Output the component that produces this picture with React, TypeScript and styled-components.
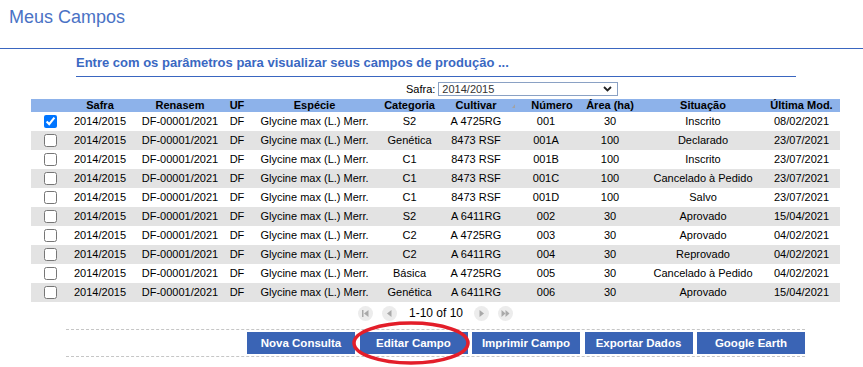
import styled, { createGlobalStyle } from 'styled-components'

const GlobalStyle = createGlobalStyle`
  body {
    margin: 0;
    background: #fff;
    font-family: "Liberation Sans", Arial, sans-serif;
  }
`;

const Page = styled.div`
  position: relative;
  width: 863px;
  height: 367px;
  overflow: hidden;
`;

const TitleBar = styled.div`
  height: 49px;
  box-sizing: border-box;
  border-bottom: 1px solid #3a66c0;
  padding: 6px 0 0 9px;
`;

const Title = styled.h1`
  margin: 0;
  font-size: 18px;
  line-height: 22px;
  font-weight: normal;
  color: #4a72c5;
`;

const Content = styled.div`
  margin-left: 31px;
  width: 809px;
`;

const Subtitle = styled.h2`
  margin: 6px 0 0 45px;
  width: 720px;
  padding-bottom: 5px;
  border-bottom: 1px solid #3a66c0;
  font-size: 13px;
  line-height: 16px;
  font-weight: bold;
  color: #3a68c2;
`;

const FilterRow = styled.div`
  display: flex;
  align-items: center;
  margin: 5px 0 3px 375px;
  font-size: 11px;
  color: #000;
`;

const SelectWrap = styled.div`
  position: relative;
  margin-left: 3px;
  width: 180px;
  height: 14px;
`;

const Select = styled.select`
  appearance: none;
  width: 100%;
  height: 14px;
  box-sizing: border-box;
  margin: 0;
  padding: 0 0 0 3px;
  border: 1px solid #8aa1c4;
  border-radius: 0;
  background: #fff;
  font-family: "Liberation Sans", Arial, sans-serif;
  font-size: 11px;
  line-height: 12px;
  color: #333;
`;

const Chevron = styled.svg`
  position: absolute;
  right: 6px;
  top: 4px;
  pointer-events: none;
`;

const Table = styled.table`
  width: 809px;
  table-layout: fixed;
  border-collapse: collapse;
  font-size: 11px;
  color: #000;
`;

const HeadCell = styled.th<{ $shift?: number }>`
  position: relative;
  height: 13px;
  padding: 0 0 0 ${(p) => p.$shift ?? 0}px;
  background: #8db2ea;
  font-weight: bold;
  line-height: 13px;
  text-align: center;
  white-space: nowrap;
`;

const SortArrow = styled.span`
  position: absolute;
  left: 75px;
  top: 4px;
  width: 0;
  height: 0;
  border-left: 4px solid transparent;
  border-right: 4px solid transparent;
  border-bottom: 5px solid #a3a3a3;
`;

const Row = styled.tr<{ $alt: boolean }>`
  height: 19px;
  background: ${(p) => (p.$alt ? '#e3e3e3' : '#fff')};
`;

const Cell = styled.td`
  padding: 0;
  text-align: center;
  white-space: nowrap;
  line-height: 19px;
`;

const Check = styled.input`
  display: block;
  width: 13px;
  height: 13px;
  margin: 0 auto 0 13px;
`;

const Pager = styled.div`
  display: flex;
  align-items: center;
  justify-content: center;
  margin-top: 4px;
  height: 15px;
  font-size: 12px;
  color: #000;
`;

const PageBtn = styled.span<{ $gap: number }>`
  display: flex;
  align-items: center;
  justify-content: center;
  width: 15px;
  height: 15px;
  border-radius: 50%;
  background: #ececec;
  margin-right: ${(p) => p.$gap}px;
`;

const PageText = styled.span`
  margin: 0 11px 0 3px;
  line-height: 15px;
`;

const ButtonBar = styled.div`
  display: flex;
  justify-content: flex-end;
  gap: 4.5px;
  margin: 8px 0 0 35px;
  width: 739px;
  padding: 2px 0;
  border-top: 1px dashed #c6c6c6;
  border-bottom: 1px dashed #c6c6c6;
`;

const ActionButton = styled.button`
  width: 108px;
  height: 22px;
  margin: 0;
  padding: 0;
  border: none;
  border-radius: 0;
  background: #3a64b5;
  color: #fff;
  font-family: "Liberation Sans", Arial, sans-serif;
  font-size: 11.5px;
  font-weight: bold;
`;

const Highlight = styled.svg`
  position: absolute;
  left: 351px;
  top: 320px;
`;

const widths = [36, 66, 94, 20, 135, 55, 78, 62, 66, 120, 77];

const rows = [
  ['S2', 'A 4725RG', '001', '30', 'Inscrito', '08/02/2021'],
  ['Genética', '8473 RSF', '001A', '100', 'Declarado', '23/07/2021'],
  ['C1', '8473 RSF', '001B', '100', 'Inscrito', '23/07/2021'],
  ['C1', '8473 RSF', '001C', '100', 'Cancelado à Pedido', '23/07/2021'],
  ['C1', '8473 RSF', '001D', '100', 'Salvo', '23/07/2021'],
  ['S2', 'A 6411RG', '002', '30', 'Aprovado', '15/04/2021'],
  ['C2', 'A 4725RG', '003', '30', 'Aprovado', '04/02/2021'],
  ['C2', 'A 6411RG', '004', '30', 'Reprovado', '04/02/2021'],
  ['Básica', 'A 4725RG', '005', '30', 'Cancelado à Pedido', '04/02/2021'],
  ['Genética', 'A 6411RG', '006', '30', 'Aprovado', '15/04/2021'],
];

const PagerIcon = ({ kind }: { kind: 'first' | 'prev' | 'next' | 'last' }) => (
  <svg width="9" height="7" viewBox="0 0 9 7" fill="#a9a9a9">
    {kind === 'first' && (
      <>
        <rect x="1" y="0" width="1.5" height="7" />
        <polygon points="7.5,0 7.5,7 3,3.5" />
      </>
    )}
    {kind === 'prev' && <polygon points="6.5,0 6.5,7 2,3.5" />}
    {kind === 'next' && <polygon points="2.5,0 2.5,7 7,3.5" />}
    {kind === 'last' && (
      <>
        <polygon points="0.5,0 0.5,7 4.5,3.5" />
        <polygon points="4.5,0 4.5,7 8.5,3.5" />
      </>
    )}
  </svg>
);

function App() {
  return (
    <Page>
      <GlobalStyle />
      <TitleBar>
        <Title>Meus Campos</Title>
      </TitleBar>
      <Content>
        <Subtitle>Entre com os parâmetros para visualizar seus campos de produção ...</Subtitle>
        <FilterRow>
          Safra:
          <SelectWrap>
            <Select defaultValue="2014/2015">
              <option>2014/2015</option>
            </Select>
            <Chevron width="9" height="6" viewBox="0 0 9 6">
              <polyline points="1,1 4.5,4.5 8,1" fill="none" stroke="#222" strokeWidth="1.8" />
            </Chevron>
          </SelectWrap>
        </FilterRow>
        <Table>
          <colgroup>
            {widths.map((w, i) => (
              <col key={i} style={{ width: w }} />
            ))}
          </colgroup>
          <thead>
            <tr>
              <HeadCell />
              <HeadCell>Safra</HeadCell>
              <HeadCell>Renasem</HeadCell>
              <HeadCell>UF</HeadCell>
              <HeadCell>Espécie</HeadCell>
              <HeadCell>Categoria</HeadCell>
              <HeadCell>
                Cultivar
                <SortArrow />
              </HeadCell>
              <HeadCell $shift={12}>Número</HeadCell>
              <HeadCell>Área (ha)</HeadCell>
              <HeadCell>Situação</HeadCell>
              <HeadCell>Última Mod.</HeadCell>
            </tr>
          </thead>
          <tbody>
            {rows.map((r, i) => (
              <Row key={i} $alt={i % 2 === 1}>
                <Cell>
                  <Check type="checkbox" defaultChecked={i === 0} />
                </Cell>
                <Cell>2014/2015</Cell>
                <Cell>DF-00001/2021</Cell>
                <Cell>DF</Cell>
                <Cell>Glycine max (L.) Merr.</Cell>
                {r.map((v, j) => (
                  <Cell key={j}>{v}</Cell>
                ))}
              </Row>
            ))}
          </tbody>
        </Table>
        <Pager>
          <PageBtn $gap={9}>
            <PagerIcon kind="first" />
          </PageBtn>
          <PageBtn $gap={9}>
            <PagerIcon kind="prev" />
          </PageBtn>
          <PageText>1-10 of 10</PageText>
          <PageBtn $gap={9}>
            <PagerIcon kind="next" />
          </PageBtn>
          <PageBtn $gap={0}>
            <PagerIcon kind="last" />
          </PageBtn>
        </Pager>
        <ButtonBar>
          <ActionButton>Nova Consulta</ActionButton>
          <ActionButton>Editar Campo</ActionButton>
          <ActionButton>Imprimir Campo</ActionButton>
          <ActionButton>Exportar Dados</ActionButton>
          <ActionButton>Google Earth</ActionButton>
        </ButtonBar>
      </Content>
      <Highlight width="122" height="46" viewBox="0 0 122 46">
        <ellipse cx="60" cy="23" rx="57" ry="20" fill="none" stroke="#e31e2a" strokeWidth="3.5" />
      </Highlight>
    </Page>
  );
}

export default App
